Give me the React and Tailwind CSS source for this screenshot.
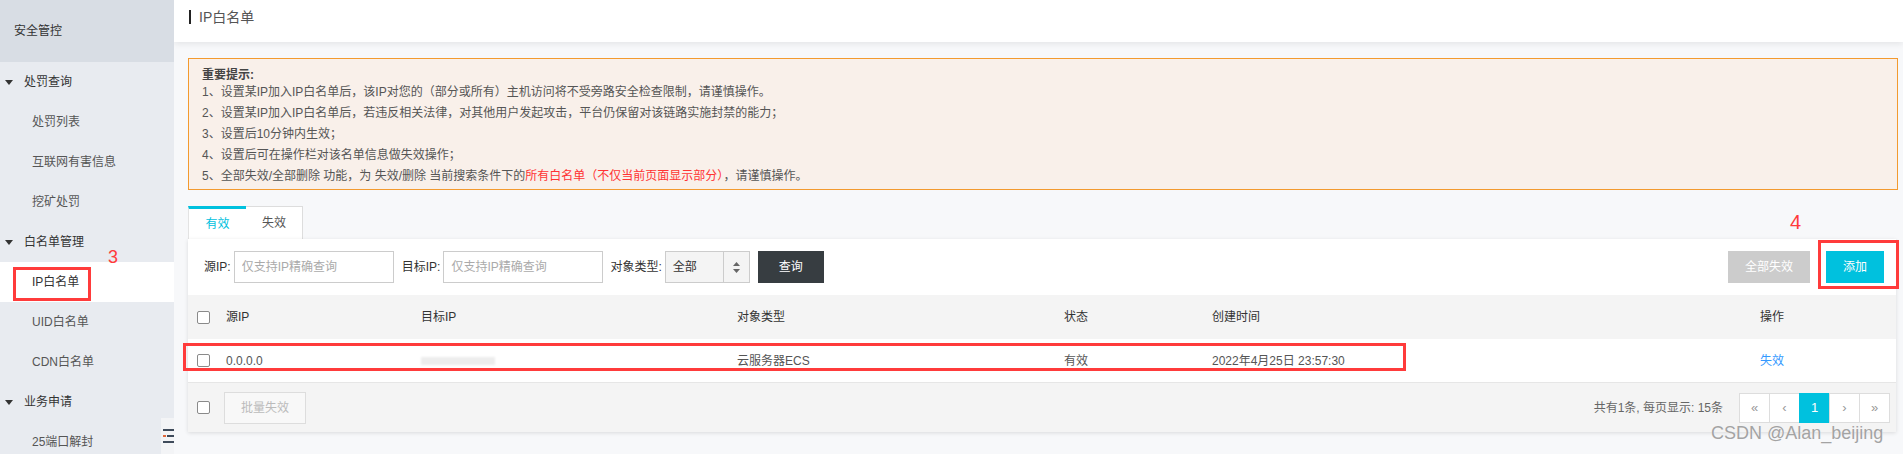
import React from 'react';

const menu = [
  { title: '处罚查询', items: ['处罚列表', '互联网有害信息', '挖矿处罚'] },
  { title: '白名单管理', items: ['IP白名单', 'UID白名单', 'CDN白名单'] },
  { title: '业务申请', items: ['25端口解封'] },
];

const tips = [
  '1、设置某IP加入IP白名单后，该IP对您的（部分或所有）主机访问将不受旁路安全检查限制，请谨慎操作。',
  '2、设置某IP加入IP白名单后，若违反相关法律，对其他用户发起攻击，平台仍保留对该链路实施封禁的能力；',
  '3、设置后10分钟内生效；',
  '4、设置后可在操作栏对该名单信息做失效操作；',
];

const cols = 'grid grid-cols-[38px_195px_316px_327px_148px_548px_1fr] items-center';

function Checkbox() {
  return <span className="block w-[13px] h-[13px] border border-[#8a8a8a] rounded-[2px] bg-white" />;
}

function Sidebar() {
  return (
    <aside className="relative w-[174px] shrink-0 bg-[#e8ebf0] text-[12px]">
      <div className="h-[62px] bg-[#d8dde4] flex items-center pl-[14px] text-[#333]">安全管控</div>
      {menu.map((group) => (
        <div key={group.title}>
          <div className="h-[40px] flex items-center pl-[5px] text-[#333]">
            <span className="w-0 h-0 border-l-[4px] border-r-[4px] border-t-[5px] border-l-transparent border-r-transparent border-t-[#333]" />
            <span className="ml-[11px]">{group.title}</span>
          </div>
          {group.items.map((item) => (
            <div
              key={item}
              className={
                'h-[40px] flex items-center pl-[32px] ' +
                (item === 'IP白名单' ? 'bg-white text-[#333]' : 'text-[#555]')
              }
            >
              {item}
            </div>
          ))}
        </div>
      ))}

      {/* 标注 3 */}
      <div className="absolute left-[13px] top-[267px] w-[78px] h-[34px] border-[3px] border-[#ff3b3b]" />
      <div className="absolute left-[108px] top-[245px] text-[18px] leading-[24px] text-[#ff3b3b]">3</div>

      {/* 折叠按钮 */}
      <div className="absolute left-[161px] top-[418px] w-[13px] h-[36px] bg-[#f3f4f6] flex items-center justify-end">
        <svg width="11" height="16" viewBox="0 0 11 16">
          <rect x="0" y="1" width="11" height="2" fill="#3f4b5b" />
          <rect x="0" y="7" width="3" height="2" fill="#e0683a" />
          <rect x="4" y="7" width="7" height="2" fill="#3f4b5b" />
          <rect x="0" y="13" width="11" height="2" fill="#3f4b5b" />
        </svg>
      </div>
    </aside>
  );
}

function Toolbar() {
  return (
    <div className="h-[56px] flex items-center pl-[16px] pr-[12px] text-[12px] text-[#333]">
      <span>源IP:</span>
      <input
        className="ml-[3px] w-[160px] h-[32px] border border-[#ccc] px-[7px] text-[12px] outline-none placeholder:text-[#aaa]"
        placeholder="仅支持IP精确查询"
      />
      <span className="ml-[8px]">目标IP:</span>
      <input
        className="ml-[3px] w-[160px] h-[32px] border border-[#ccc] px-[7px] text-[12px] outline-none placeholder:text-[#aaa]"
        placeholder="仅支持IP精确查询"
      />
      <span className="ml-[7px]">对象类型:</span>
      <div className="ml-[3px] w-[85px] h-[32px] border border-[#ccc] bg-[#f4f4f4] flex items-center">
        <span className="flex-1 pl-[7px] text-[#333]">全部</span>
        <span className="w-[26px] h-full border-l border-[#ccc] flex items-center justify-center">
          <svg width="7" height="11" viewBox="0 0 7 11">
            <path d="M3.5 0 L7 4 L0 4 Z" fill="#666" />
            <path d="M0 7 L7 7 L3.5 11 Z" fill="#666" />
          </svg>
        </span>
      </div>
      <button className="ml-[8px] w-[66px] h-[32px] bg-[#373d41] text-white text-[12px]">查询</button>

      <button className="ml-auto w-[82px] h-[32px] bg-[#cccccc] text-white text-[12px]">全部失效</button>
      <button className="ml-[16px] w-[58px] h-[32px] bg-[#00c1de] text-white text-[12px]">添加</button>
    </div>
  );
}

function Table() {
  return (
    <div className="text-[12px]">
      <div className={cols + ' h-[44px] bg-[#f4f4f4] text-[#333]'}>
        <div className="pl-[9px]"><Checkbox /></div>
        <div>源IP</div>
        <div>目标IP</div>
        <div>对象类型</div>
        <div>状态</div>
        <div>创建时间</div>
        <div>操作</div>
      </div>
      <div className={cols + ' h-[44px] bg-white text-[#555] border-b border-[#e6e6e6]'}>
        <div className="pl-[9px]"><Checkbox /></div>
        <div>0.0.0.0</div>
        <div>
          <div className="w-[74px] h-[8px] bg-[#ededed] blur-[1px]" />
        </div>
        <div>云服务器ECS</div>
        <div>有效</div>
        <div>2022年4月25日 23:57:30</div>
        <div className="text-[#3399ff]">失效</div>
      </div>
      <div className="h-[49px] bg-[#f4f4f4] flex items-center pl-[9px] pr-[6px]">
        <Checkbox />
        <button className="ml-[14px] w-[82px] h-[32px] border border-[#ddd] bg-[#f8f8f8] text-[#bbb] text-[12px]">批量失效</button>
        <span className="ml-auto text-[#666]">共有1条, 每页显示: 15条</span>
        <div className="ml-[16px] flex">
          {['«', '‹', '1', '›', '»'].map((p, i) => (
            <span
              key={i}
              className={
                'w-[31px] h-[30px] flex items-center justify-center border -ml-px first:ml-0 ' +
                (p === '1'
                  ? 'bg-[#00c1de] border-[#00c1de] text-white text-[13px]'
                  : 'bg-white border-[#ddd] text-[#999] text-[13px]')
              }
            >
              {p}
            </span>
          ))}
        </div>
      </div>
    </div>
  );
}

export default function App() {
  return (
    <div className="relative flex w-[1903px] h-[454px] overflow-hidden bg-[#f7f8fa] font-['Liberation_Sans','Noto_Sans_CJK_SC',sans-serif]">
      <Sidebar />
      <main className="flex-1 flex flex-col">
        <header className="h-[42px] shrink-0 bg-white shadow-[0_2px_6px_rgba(0,0,0,0.08)] flex items-start pt-[10px] pl-[15px]">
          <span className="w-[2px] h-[14px] bg-[#222]" />
          <span className="ml-[8px] text-[14px] leading-[14px] text-[#555]">IP白名单</span>
        </header>

        <div className="pl-[14px] pr-[5px] pt-[16px]">
          <div className="border border-[#f39a2f] bg-[#f9f0ea] px-[13px] pt-[9px] pb-[2px] text-[12px] text-[#555]">
            <div className="font-bold leading-[14px] text-[#444]">重要提示:</div>
            {tips.map((t) => (
              <div key={t} className="leading-[21px]">{t}</div>
            ))}
            <div className="leading-[21px]">
              5、全部失效/全部删除 功能，为 失效/删除 当前搜索条件下的
              <span className="text-[#ff3333]">所有白名单（不仅当前页面显示部分）</span>，请谨慎操作。
            </div>
          </div>

          <div className="relative mt-[16px] flex h-[33px] text-[12px]">
            <div className="w-[58px] bg-white border-t-[3px] border-[#00c1de] border-l border-l-[#e3e3e3] flex items-center justify-center text-[#00c1de]">有效</div>
            <div className="w-[57px] bg-white border-t border-r border-[#ddd] flex items-center justify-center text-[#555]">失效</div>
            <div className="absolute left-[1602px] top-[3px] text-[20px] leading-[26px] text-[#ff3b3b]">4</div>
          </div>

          <div className="relative mr-[2px] bg-white shadow-[0_1px_4px_rgba(0,0,0,0.12)]">
            <Toolbar />
            <Table />
            {/* 标注框 */}
            <div className="absolute left-[1630px] top-[1px] w-[81px] h-[49px] border-[3px] border-[#ff3b3b]" />
            <div className="absolute left-[-5px] top-[104px] w-[1223px] h-[28px] border-[3px] border-[#ff3b3b]" />
          </div>
        </div>
      </main>

      <div className="absolute left-[1711px] top-[421px] text-[18px] leading-[24px] text-[#a3a3a3] [text-shadow:0_0_1px_rgba(255,255,255,0.8)]">
        CSDN @Alan_beijing
      </div>
    </div>
  );
}
